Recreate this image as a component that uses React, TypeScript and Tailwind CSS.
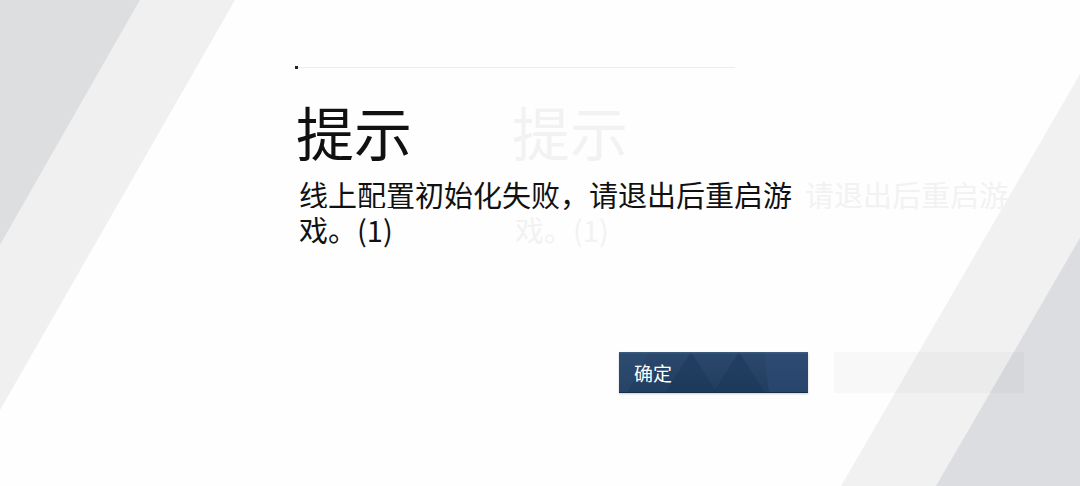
import React from "react";

const CJK = '"Noto Sans CJK SC", "Noto Sans", sans-serif';

function Backdrop() {
  return (
    <svg
      className="absolute inset-0 h-full w-full"
      viewBox="0 0 1080 486"
      preserveAspectRatio="none"
      aria-hidden="true"
    >
      <polygon points="140,0 235,0 0,410 0,245" fill="#f0f0f1" />
      <polygon points="0,0 140,0 0,245" fill="#dddee0" />
      <polygon points="841,486 1123,0 1300,0 1300,486" fill="#f1f1f2" />
      <polygon points="936,486 1218,0 1300,0 1300,486" fill="#dcdde0" />
    </svg>
  );
}

function ButtonPattern() {
  return (
    <svg
      className="absolute inset-0 h-full w-full"
      viewBox="0 0 189 41"
      preserveAspectRatio="none"
      aria-hidden="true"
    >
      <defs>
        <linearGradient id="btnShade" x1="0" y1="0" x2="0" y2="1">
          <stop offset="0" stopColor="#2b496d" />
          <stop offset="1" stopColor="#213d5f" />
        </linearGradient>
      </defs>
      <rect width="189" height="41" fill="url(#btnShade)" />
      <polygon points="145,0 189,0 189,41 150,41" fill="#30507a" opacity="0.45" />
      <polygon points="72,0 46,41 98,41" fill="#1c3657" opacity="0.55" />
      <polygon points="120,0 94,41 146,41" fill="#1c3657" opacity="0.55" />
      <polygon points="0,0 30,0 8,41 0,41" fill="#2f4f74" opacity="0.4" />
      <rect width="189" height="1.5" fill="#456587" opacity="0.6" />
      <rect y="40" width="189" height="1" fill="#182e4a" />
    </svg>
  );
}

function DialogLayer({ ghost }: { ghost?: boolean }) {
  const textTone = ghost ? "text-[#f2f2f2]" : "text-[#111] bg-[#fefefe]";
  return (
    <div className="flex w-[513px] flex-col">
      <div className="flex h-[3px] items-center">
        {ghost ? (
          <div className="h-[3px] w-[3px]" />
        ) : (
          <div className="h-[3px] w-[3px] bg-[#222]" />
        )}
        <div className="h-px w-[221px] bg-[#ececec]" />
      </div>
      <h1
        className="mt-[33px] pl-px text-[58px] leading-[58px] font-normal"
        style={{ fontFamily: CJK }}
      >
        <span className={textTone}>提示</span>
      </h1>
      <p
        className="mt-[17px] pl-[4px] text-[29px] leading-[35px]"
        style={{ fontFamily: CJK }}
      >
        <span className={textTone}>线上配置初始化失败，请退出后重启游戏。(1)</span>
      </p>
      <div className="mt-[105px] flex justify-end">
        {ghost ? (
          <div className="h-[41px] w-[190px] bg-[#000]/[0.025]" />
        ) : (
          <button
            type="button"
            className="relative h-[41px] w-[189px] overflow-hidden text-left shadow-[0_1px_2px_rgba(0,0,0,0.2)]"
          >
            <ButtonPattern />
            <span
              className="relative pl-[15px] text-[19px] leading-[41px] text-white"
              style={{ fontFamily: CJK }}
            >
              确定
            </span>
          </button>
        )}
      </div>
    </div>
  );
}

export default function App() {
  return (
    <div className="relative h-[486px] w-[1080px] overflow-hidden bg-[#fefefe]">
      <Backdrop />
      <div className="relative pt-[66px] pl-[295px]">
        <div className="pointer-events-none absolute top-[66px] left-[511px]" aria-hidden="true">
          <DialogLayer ghost />
        </div>
        <div className="relative">
          <DialogLayer />
        </div>
      </div>
    </div>
  );
}
